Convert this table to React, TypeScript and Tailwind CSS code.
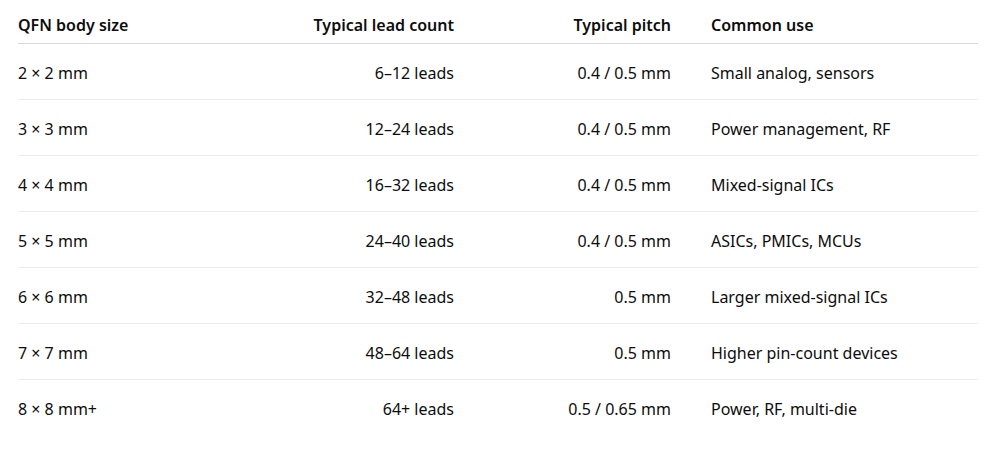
const rows = [
  ["2 × 2 mm", "6–12 leads", "0.4 / 0.5 mm", "Small analog, sensors"],
  ["3 × 3 mm", "12–24 leads", "0.4 / 0.5 mm", "Power management, RF"],
  ["4 × 4 mm", "16–32 leads", "0.4 / 0.5 mm", "Mixed-signal ICs"],
  ["5 × 5 mm", "24–40 leads", "0.4 / 0.5 mm", "ASICs, PMICs, MCUs"],
  ["6 × 6 mm", "32–48 leads", "0.5 mm", "Larger mixed-signal ICs"],
  ["7 × 7 mm", "48–64 leads", "0.5 mm", "Higher pin-count devices"],
  ["8 × 8 mm+", "64+ leads", "0.5 / 0.65 mm", "Power, RF, multi-die"],
];

function App() {
  return (
    <div
      className="bg-white w-[989px] h-[461px] pl-[18px] pr-[11px] pt-[7px] text-[#0d0d0d] text-[16px]"
      style={{ fontFamily: '"Segoe UI", "Noto Sans", sans-serif' }}
    >
      <div className="grid grid-cols-[216px_220px_217px_1fr] font-semibold border-b border-[#d9d9d9]">
        <div className="py-[6px] leading-6">QFN body size</div>
        <div className="py-[6px] leading-6 text-right">Typical lead count</div>
        <div className="py-[6px] leading-6 text-right">Typical pitch</div>
        <div className="py-[6px] leading-6 pl-10">Common use</div>
      </div>
      {rows.map((r, i) => (
        <div
          key={r[0]}
          className={`grid grid-cols-[216px_220px_217px_1fr] h-14 items-center pt-[2px] ${
            i < rows.length - 1 ? "border-b border-[#ececec]" : ""
          }`}
        >
          <div className="leading-6">{r[0]}</div>
          <div className="leading-6 text-right">{r[1]}</div>
          <div className="leading-6 text-right">{r[2]}</div>
          <div className="leading-6 pl-10">{r[3]}</div>
        </div>
      ))}
    </div>
  );
}

export default App;
